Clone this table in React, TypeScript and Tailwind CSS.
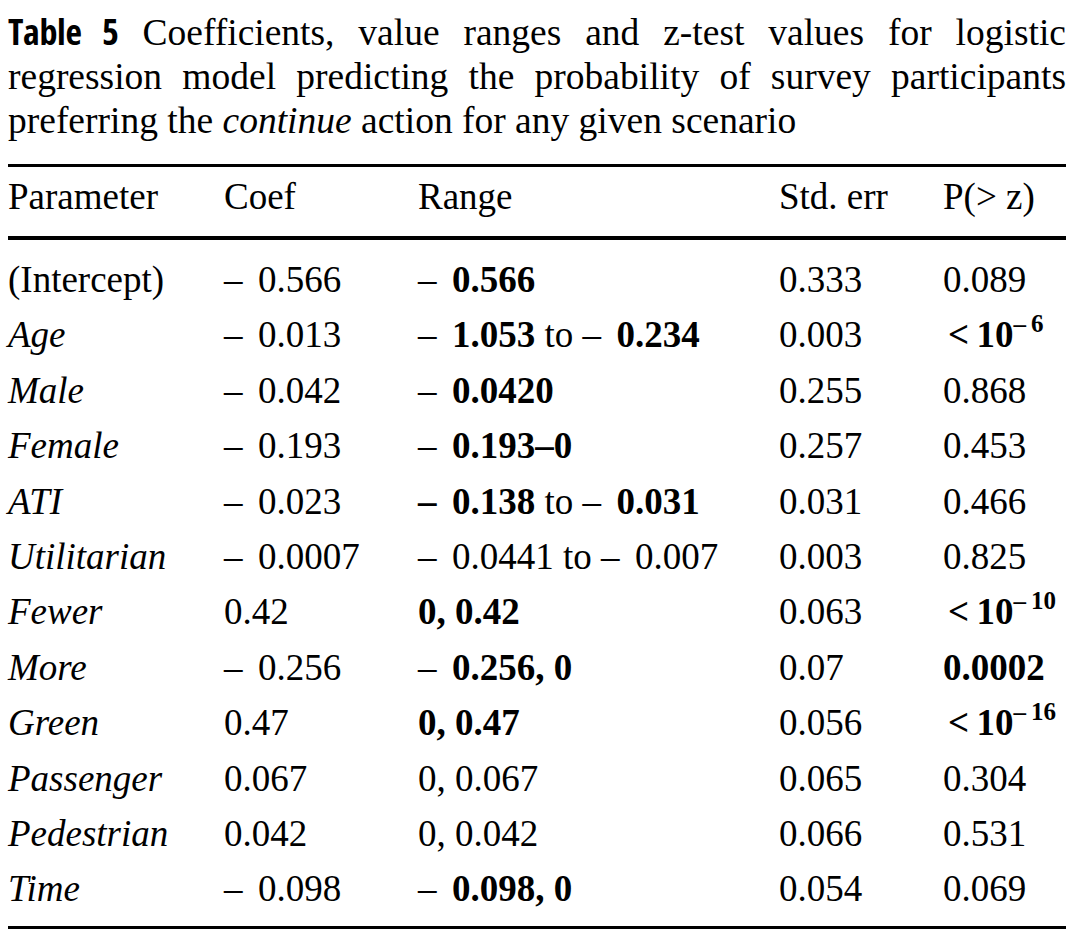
import type { ReactNode } from "react";

type Row = {
  param: string;
  italic: boolean;
  coef: ReactNode;
  range: ReactNode;
  se: string;
  p: ReactNode;
};

// minus sign with the wide gap the typeset table uses
function M() {
  return <span className="inline-block w-[34px]">–</span>;
}

function Lt({ exp }: { exp: string }) {
  return (
    <b className="pl-[5px]">
      {"<\u200910"}
      <sup className="text-[25px] top-[-0.62em]">{"–\u2009" + exp}</sup>
    </b>
  );
}

const rows: Row[] = [
  { param: "(Intercept)", italic: false, coef: <><M />0.566</>, range: <><M /><b>0.566</b></>, se: "0.333", p: "0.089" },
  { param: "Age", italic: true, coef: <><M />0.013</>, range: <><M /><b>1.053</b> to <M /><b>0.234</b></>, se: "0.003", p: <Lt exp="6" /> },
  { param: "Male", italic: true, coef: <><M />0.042</>, range: <><M /><b>0.0420</b></>, se: "0.255", p: "0.868" },
  { param: "Female", italic: true, coef: <><M />0.193</>, range: <><M /><b>0.193–0</b></>, se: "0.257", p: "0.453" },
  { param: "ATI", italic: true, coef: <><M />0.023</>, range: <><b><M /></b><b>0.138</b> to <M /><b>0.031</b></>, se: "0.031", p: "0.466" },
  { param: "Utilitarian", italic: true, coef: <><M />0.0007</>, range: <><M />0.0441 to <M />0.007</>, se: "0.003", p: "0.825" },
  { param: "Fewer", italic: true, coef: "0.42", range: <b>0, 0.42</b>, se: "0.063", p: <Lt exp="10" /> },
  { param: "More", italic: true, coef: <><M />0.256</>, range: <><M /><b>0.256, 0</b></>, se: "0.07", p: <b>0.0002</b> },
  { param: "Green", italic: true, coef: "0.47", range: <b>0, 0.47</b>, se: "0.056", p: <Lt exp="16" /> },
  { param: "Passenger", italic: true, coef: "0.067", range: "0, 0.067", se: "0.065", p: "0.304" },
  { param: "Pedestrian", italic: true, coef: "0.042", range: "0, 0.042", se: "0.066", p: "0.531" },
  { param: "Time", italic: true, coef: <><M />0.098</>, range: <><M /><b>0.098, 0</b></>, se: "0.054", p: "0.069" },
];

const cols = "grid grid-cols-[216px_194px_361px_164px_123px]";

export default function App() {
  return (
    <div className="w-[1080px] h-[940px] bg-white pt-[10px] pl-[8px] text-black font-['Liberation_Serif',serif]">
      <div className="w-[1058px]">
        {/* caption */}
        <p className="text-[37.5px] leading-[44px] text-justify">
          <span className="font-['Open_Sans',sans-serif] font-bold text-[36px] tracking-[-0.01em] font-stretch-[82%]">
            Table 5
          </span>{" "}
          Coefficients, value ranges and z-test values for logistic regression model predicting the probability of
          survey participants preferring the <i>continue</i> action for any given scenario
        </p>

        <div className="mt-[21px] h-[3px] bg-black" />

        <div className={`${cols} text-[37px] leading-[45px] pt-[7px] pb-[17px]`}>
          <div>Parameter</div>
          <div>Coef</div>
          <div>Range</div>
          <div>Std. err</div>
          <div>P(&gt; z)</div>
        </div>

        <div className="h-[4px] bg-black" />

        <div className="pt-[12px] pb-[9px] text-[37px] leading-[55.4px]">
          {rows.map((r) => (
            <div key={r.param} className={cols}>
              <div className={r.italic ? "italic" : ""}>{r.param}</div>
              <div className="whitespace-nowrap">{r.coef}</div>
              <div className="whitespace-nowrap">{r.range}</div>
              <div>{r.se}</div>
              <div className="whitespace-nowrap">{r.p}</div>
            </div>
          ))}
        </div>

        <div className="h-[3px] bg-black" />
      </div>
    </div>
  );
}
